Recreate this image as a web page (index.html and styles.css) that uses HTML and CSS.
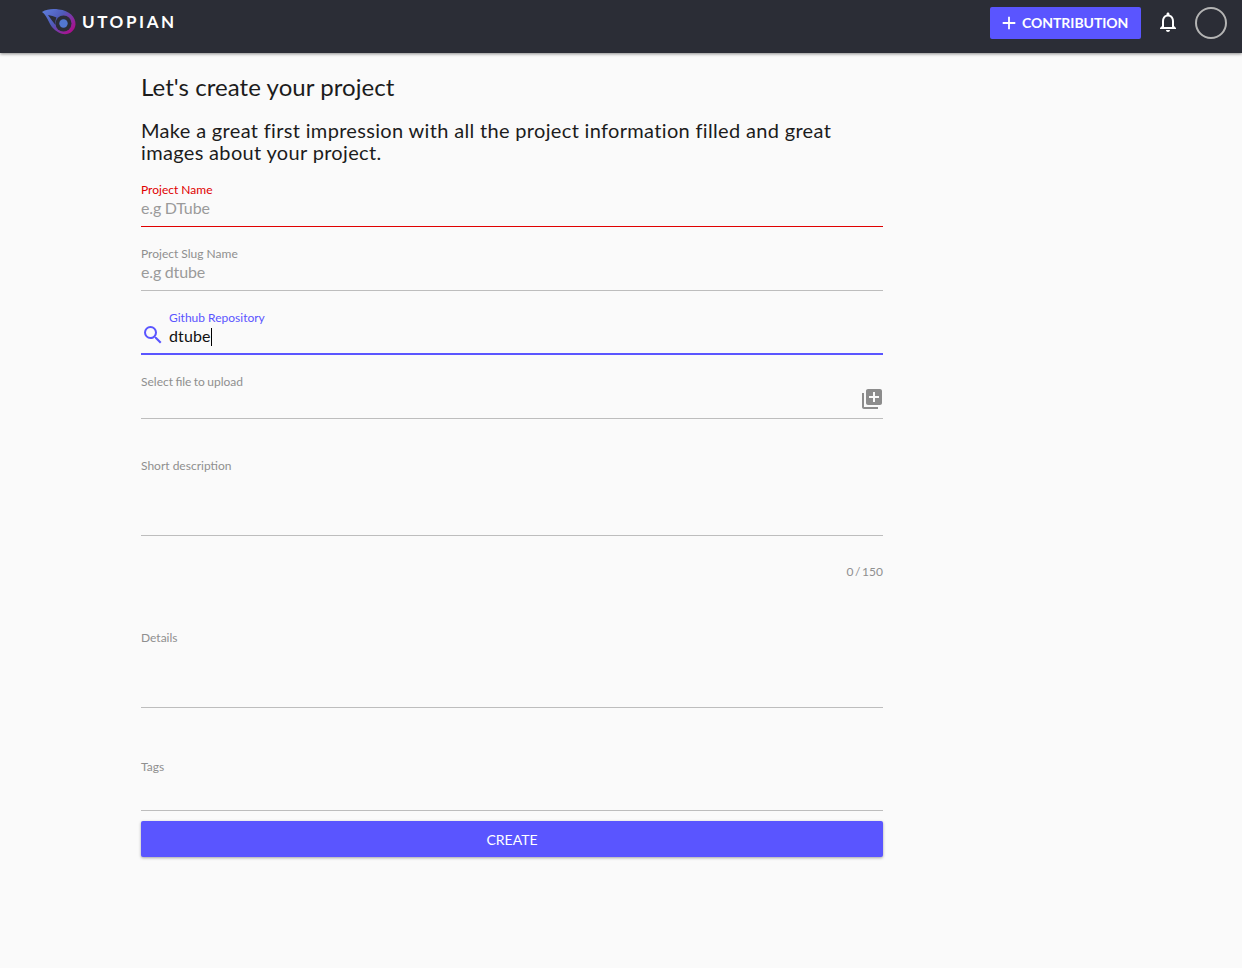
FILE: index.html
```html
<!DOCTYPE html>
<html lang="en">
<head>
<meta charset="utf-8">
<title>Utopian</title>
<link rel="stylesheet" href="styles.css">
</head>
<body>
<header class="topbar">
  <a class="brand">
    <svg class="logo" width="36" height="30" viewBox="0 0 36 30">
      <defs>
        <linearGradient id="lg" x1="0" y1="0" x2="1" y2="0.7">
          <stop offset="0" stop-color="#5f80e0"/>
          <stop offset="0.5" stop-color="#4f5ab8"/>
          <stop offset="0.8" stop-color="#8a2aa0"/>
          <stop offset="1" stop-color="#a8108c"/>
        </linearGradient>
      </defs>
      <path d="M1 5 C6 2 12 1.500 18 2.500 C28 3.500 35 10 34.500 17.500 C34 24 28 28 22 27 C17 26 11 22 8 15 C6 11 4 7 1 5 Z" fill="url(#lg)"/>
      <path d="M7 8 C10 8.500 13 9.500 15.500 10.500 C14.500 13 14 15.500 14.500 18 C12 15 9.500 11.500 7 8 Z" fill="#2b2d36"/>
      <circle cx="22.500" cy="16.500" r="8" fill="#2b2d36"/>
      <circle cx="22.500" cy="16.500" r="4.200" fill="#5277d0"/>
    </svg>
    <span class="brand-name">UTOPIAN</span>
  </a>
  <div class="actions">
    <button class="contribute">
      <svg width="18" height="18" viewBox="0 0 24 24"><path d="M19 13h-6v6h-2v-6H5v-2h6V5h2v6h6v2z" fill="#fff" transform="translate(-2.400 -2.400) scale(1.200)"/></svg>
      <span>CONTRIBUTION</span>
    </button>
    <svg class="bell" width="24" height="24" viewBox="0 0 24 24"><path d="M12 22c1.100 0 2-.9 2-2h-4c0 1.100.9 2 2 2zm6-6v-5c0-3.070-1.630-5.640-4.500-6.320V4c0-.83-.67-1.500-1.500-1.500s-1.500.67-1.500 1.500v.68C7.640 5.360 6 7.920 6 11v5l-2 2v1h16v-1l-2-2zm-2 1H8v-6c0-2.480 1.510-4.500 4-4.500s4 2.020 4 4.500v6z" fill="#fff"/></svg>
    <div class="avatar"></div>
  </div>
</header>
<main class="page">
  <h1 class="title">Let's create your project</h1>
  <h2 class="subtitle">Make a great first impression with all the project information filled and great images about your project.</h2>
  <form class="form">
    <div class="field error">
      <label class="label">Project Name</label>
      <div class="value placeholder">e.g DTube</div>
    </div>
    <div class="field">
      <label class="label">Project Slug Name</label>
      <div class="value placeholder">e.g dtube</div>
    </div>
    <div class="field focused">
      <svg class="search" width="24" height="24" viewBox="0 0 24 24"><path d="M15.500 14h-.79l-.28-.27A6.470 6.470 0 0 0 16 9.500 6.500 6.500 0 1 0 9.500 16c1.610 0 3.090-.59 4.230-1.570l.27.28v.79l5 4.990L20.490 19l-4.990-5zm-6 0C7.010 14 5 11.990 5 9.500S7.010 5 9.500 5 14 7.010 14 9.500 11.990 14 9.500 14z" fill="#5a55ff"/></svg>
      <label class="label">Github Repository</label>
      <div class="value">dtube<span class="caret"></span></div>
    </div>
    <div class="field upload">
      <label class="label">Select file to upload</label>
      <svg class="add" width="24" height="24" viewBox="0 0 24 24"><path d="M4 6H2v14c0 1.100.9 2 2 2h14v-2H4V6zm16-4H8c-1.100 0-2 .9-2 2v12c0 1.100.9 2 2 2h12c1.100 0 2-.9 2-2V4c0-1.100-.9-2-2-2zm-1 9h-4v4h-2v-4H9V9h4V5h2v4h4v2z" fill="#8c8c8c"/></svg>
    </div>
    <div class="field short">
      <label class="label">Short description</label>
    </div>
    <div class="counter">0 / 150</div>
    <div class="field details">
      <label class="label">Details</label>
    </div>
    <div class="field tags">
      <label class="label">Tags</label>
    </div>
    <button class="create" type="button">CREATE</button>
  </form>
</main>
</body>
</html>
```
FILE: styles.css
```css
* { box-sizing: border-box; }
html, body { margin: 0; padding: 0; }
body {
  height: 968px;
  overflow: hidden;
  background: #fafafa;
  font-family: Lato, sans-serif;
  color: #1c1c1c;
}
.topbar {
  height: 53px;
  background: #2b2d36;
  box-shadow: 0 1px 3px rgba(0,0,0,.45);
  display: flex;
  justify-content: space-between;
  align-items: flex-start;
  padding: 0 15px 0 41px;
}
.brand { display: flex; align-items: center; height: 44px; }
.logo { display: block; }
.brand-name {
  color: #fff;
  font-weight: 700;
  font-size: 17px;
  letter-spacing: 2.6px;
  margin: 0 0 2px 5px;
}
.actions { display: flex; align-items: center; height: 46px; }
.contribute {
  width: 151px;
  height: 32px;
  border: 0;
  border-radius: 2px;
  background: #5a55ff;
  color: #fff;
  font: 700 14px Lato, sans-serif;
  letter-spacing: -.05px;
  display: flex;
  align-items: center;
  justify-content: flex-start;
  gap: 4px;
  padding: 0 0 2px 10px;
}
.contribute svg { margin-top: 2px; }
.bell { margin: -2px 0 0 15px; display: block; }
.avatar {
  width: 32px;
  height: 32px;
  border: 2px solid #b4b4b4;
  border-radius: 50%;
  margin-left: 15px;
}
.page { width: 742px; margin-left: 141px; }
.title {
  font-size: 24px;
  font-weight: 400;
  line-height: 30px;
  letter-spacing: .06px;
  margin: 19px 0 0;
}
.subtitle {
  font-size: 20px;
  font-weight: 400;
  line-height: 22px;
  letter-spacing: .33px;
  margin: 17px 0 0;
}
.form { display: flex; flex-direction: column; }
.field {
  position: relative;
  height: 64px;
  border-bottom: 1px solid #bdbdbd;
  padding-top: 20px;
}
.label {
  display: block;
  font-size: 12px;
  line-height: 14px;
  color: #8f8f8f;
}
.upload .label { word-spacing: -.7px; }
.value {
  font-size: 16px;
  line-height: 22px;
  margin-top: 0;
}
.placeholder { color: #9a9a9a; word-spacing: -.6px; letter-spacing: -.1px; }
.field.error { border-bottom: 1px solid #e00000; }
.error .label { color: #e00000; }
.focused { border-bottom: 2px solid #5a55ff; padding-left: 28px; }
.focused .label { color: #5a55ff; }
.focused .value { color: #111; letter-spacing: .1px; }
.caret {
  display: inline-block;
  width: 1px;
  height: 18px;
  background: #000;
  vertical-align: -4px;
}
.search { position: absolute; left: 0; top: 32px; }
.add { position: absolute; right: -1px; top: 32px; }
.short { height: 117px; padding-top: 40px; }
.counter {
  font-size: 12px;
  line-height: 14px;
  color: #8f8f8f;
  text-align: right;
  word-spacing: -1.5px;
  margin-top: 29px;
}
.details { height: 129px; padding-top: 52px; }
.tags { height: 103px; padding-top: 52px; }
.create {
  height: 36px;
  margin-top: 10px;
  border: 0;
  border-radius: 2px;
  background: #5a55ff;
  color: #fff;
  font: 400 14px Lato, sans-serif;
  box-shadow: 0 1px 3px rgba(0,0,0,.35);
}
```
